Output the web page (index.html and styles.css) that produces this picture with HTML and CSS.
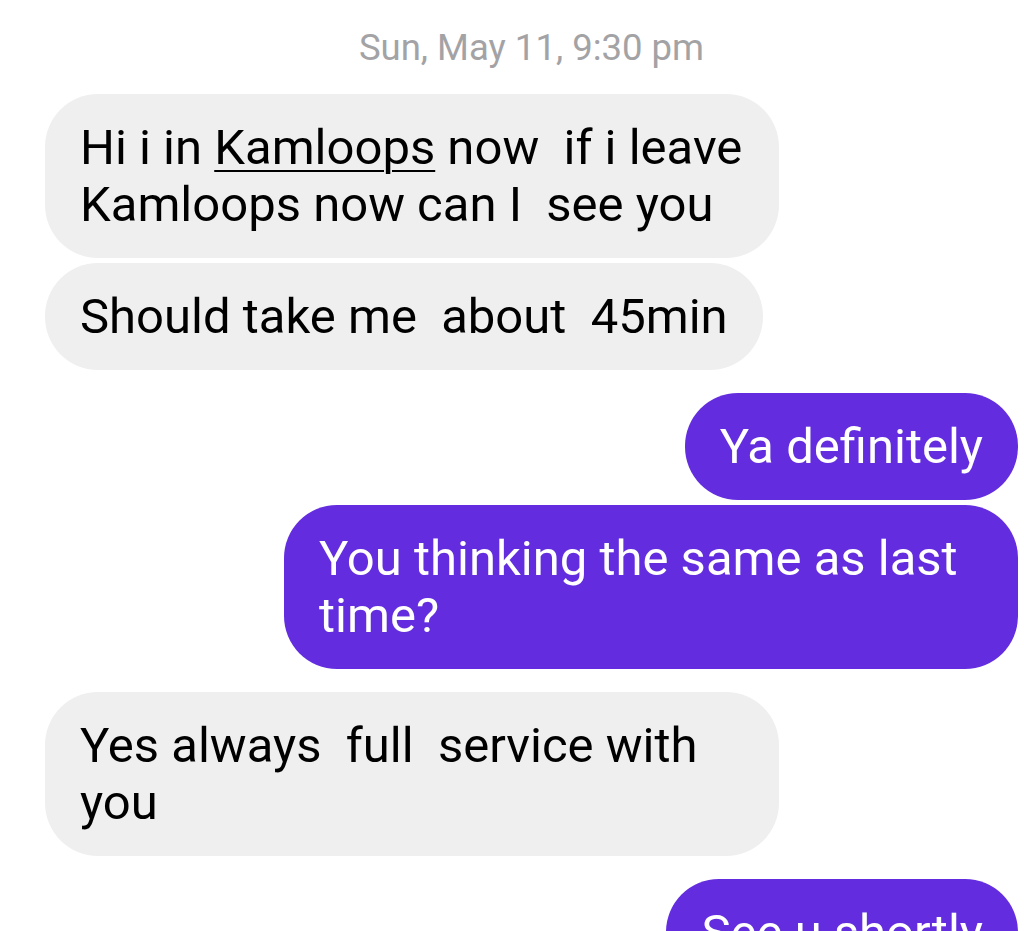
FILE: index.html
```html
<!DOCTYPE html>
<html lang="en">
<head>
    <meta charset="UTF-8">
    <meta name="viewport" content="width=device-width, initial-scale=1.0">
    <title>Messages</title>
    <link rel="stylesheet" href="styles.css">
</head>
<body>
    <div class="thread">
        <div class="timestamp">Sun, May 11, 9:30 pm</div>

        <div class="group received">
            <div class="bubble">Hi i in <span class="link">Kamloops</span> now  if i leave Kamloops now can I  see you</div>
            <div class="bubble">Should take me  about  45min</div>
        </div>

        <div class="group sent">
            <div class="bubble">Ya definitely</div>
            <div class="bubble">You thinking the same as last time?</div>
        </div>

        <div class="group received">
            <div class="bubble">Yes always  full  service with you</div>
        </div>

        <div class="group sent">
            <div class="bubble">See u shortly</div>
        </div>
    </div>
</body>
</html>
```

FILE: styles.css
```css
body {
    margin: 0;
    background-color: #ffffff;
    font-family: Roboto, "Liberation Sans", sans-serif;
    overflow: hidden;
}
.thread {
    padding: 0 6px 0 45px;
    height: 931px;
    overflow: hidden;
}
.timestamp {
    color: #a3a3a6;
    font-size: 36.5px;
    text-align: center;
    height: 94px;
    line-height: 96px;
}
.group {
    display: flex;
    flex-direction: column;
    gap: 5px;
    margin-bottom: 23px;
}
.received {
    align-items: flex-start;
}
.sent {
    align-items: flex-end;
}
.bubble {
    max-width: 664px;
    padding: 25px 35px;
    border-radius: 53px;
    font-size: 49px;
    line-height: 57px;
    white-space: pre-wrap;
}
.received .bubble {
    background-color: #efefef;
    color: #000000;
}
.sent .bubble {
    background-color: #632ddf;
    color: #ffffff;
}
.link {
    text-decoration: underline;
    text-decoration-thickness: 2px;
    text-underline-offset: 6px;
}
```
